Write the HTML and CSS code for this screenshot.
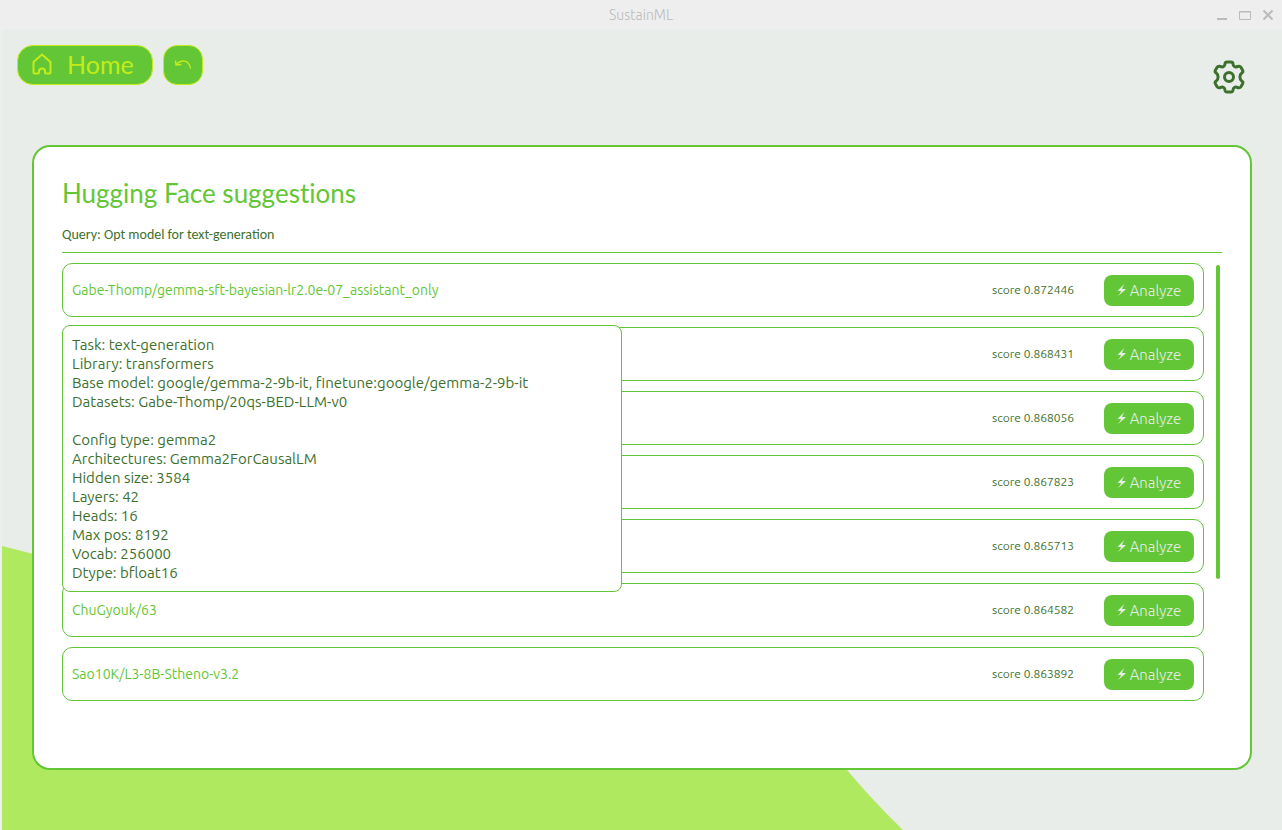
FILE: index.html
```html
<!DOCTYPE html>
<html lang="en">
<head>
  <meta charset="utf-8">
  <title>SustainML</title>
  <link rel="stylesheet" href="styles.css">
</head>
<body>
  <!-- Shared icon -->
  <svg class="icon-defs" aria-hidden="true">
    <symbol id="bolt" viewBox="0 0 9 12">
      <path d="M7.500 0 .5 6.700 4.300 7.200 1 12 9 5.200 4.800 4.700z" fill="currentColor" stroke="none"/>
    </symbol>
  </svg>

  <!-- Window title bar -->
  <header class="titlebar">
    <span class="titlebar-name">SustainML</span>
    <div class="window-controls">
      <button class="window-btn" aria-label="Minimize">
        <svg width="12" height="12" viewBox="0 0 12 12"><path d="M1 10h10" stroke-width="2"/></svg>
      </button>
      <button class="window-btn" aria-label="Maximize">
        <svg width="12" height="12" viewBox="0 0 12 12"><path d="M.5 2.500h11v8H.5zM0 3h12"/></svg>
      </button>
      <button class="window-btn" aria-label="Close">
        <svg width="12" height="12" viewBox="0 0 12 12"><path d="M1.500 1.500l9 9M10.500 1.500l-9 9" stroke-width="2"/></svg>
      </button>
    </div>
  </header>

  <main class="page">
    <svg class="hill" viewBox="0 0 1280 800" preserveAspectRatio="none" aria-hidden="true">
      <path d="M0 516C300 596 758 640 845 740Q872 772 901 800H0z" fill="#afe95f"/>
    </svg>

    <nav class="toolbar">
      <button class="btn nav-btn home-btn">
        <svg width="20" height="22" viewBox="0 0 20 22">
          <path d="M1.500 9 10 1.500 18.500 9v10.500q0 1-1 1H14q-1 0-1-1V18q0-2.500-3-2.500T7 18v1.500q0 1-1 1H2.500q-1 0-1-1z"/>
        </svg>
        Home
      </button>
      <button class="btn nav-btn undo-btn" aria-label="Back">
        <svg width="18" height="12" viewBox="0 0 18 12">
          <path d="M1.500 1.500 2 6l5.500-.5M2 6C7 0 15 .5 16.500 9.500"/>
        </svg>
      </button>
      <button class="settings-btn" aria-label="Settings">
        <svg width="34" height="34" viewBox="0 0 34 34">
          <path d="M15 2h4q1.800 0 2 1.800c.2 2.700 2 3.700 4.500 2.700q2.300-.9 3.400.8l1.700 2.900q.9 1.700-.8 2.800c-2.500 1.800-2.500 6.200 0 8q1.700 1.100.8 2.800l-1.700 2.900q-1.100 1.700-3.400.8c-2.500-1-4.300 0-4.500 2.700q-.2 1.800-2 1.800h-4q-1.800 0-2-1.800c-.2-2.700-2-3.700-4.500-2.700q-2.300.9-3.400-.8l-1.700-2.900q-.9-1.700.8-2.800c2.500-1.800 2.500-6.200 0-8q-1.700-1.100-.8-2.800l1.700-2.900q1.100-1.700 3.400-.8c2.500 1 4.300 0 4.500-2.700q.2-1.800 2-1.800z"/>
          <circle cx="17" cy="17" r="4.500"/>
        </svg>
      </button>
    </nav>

    <section class="card">
      <h1 class="card-title">Hugging Face suggestions</h1>
      <p class="query">Query: Opt model for text-generation</p>

      <div class="results">
        <ul class="result-list">
          <li class="result">
            <a class="result-name" href="#">Gabe-Thomp/gemma-sft-bayesian-lr2.0e-07_assistant_only</a>
            <span class="score">score 0.872446</span>
            <button class="btn analyze-btn"><svg width="9" height="12"><use href="#bolt"/></svg>Analyze</button>
            <!-- Model details -->
            <div class="tooltip" role="tooltip">Task: text-generation
Library: transformers
Base model: google/gemma-2-9b-it, finetune:google/gemma-2-9b-it
Datasets: Gabe-Thomp/20qs-BED-LLM-v0

Config type: gemma2
Architectures: Gemma2ForCausalLM
Hidden size: 3584
Layers: 42
Heads: 16
Max pos: 8192
Vocab: 256000
Dtype: bfloat16</div>
          </li>
          <li class="result">
            <span class="score">score 0.868431</span>
            <button class="btn analyze-btn"><svg width="9" height="12"><use href="#bolt"/></svg>Analyze</button>
          </li>
          <li class="result">
            <span class="score">score 0.868056</span>
            <button class="btn analyze-btn"><svg width="9" height="12"><use href="#bolt"/></svg>Analyze</button>
          </li>
          <li class="result">
            <span class="score">score 0.867823</span>
            <button class="btn analyze-btn"><svg width="9" height="12"><use href="#bolt"/></svg>Analyze</button>
          </li>
          <li class="result">
            <span class="score">score 0.865713</span>
            <button class="btn analyze-btn"><svg width="9" height="12"><use href="#bolt"/></svg>Analyze</button>
          </li>
          <li class="result">
            <a class="result-name" href="#">ChuGyouk/63</a>
            <span class="score">score 0.864582</span>
            <button class="btn analyze-btn"><svg width="9" height="12"><use href="#bolt"/></svg>Analyze</button>
          </li>
          <li class="result">
            <a class="result-name" href="#">Sao10K/L3-8B-Stheno-v3.2</a>
            <span class="score">score 0.863892</span>
            <button class="btn analyze-btn"><svg width="9" height="12"><use href="#bolt"/></svg>Analyze</button>
          </li>
        </ul>
        <div class="scroll-track">
          <div class="scroll-thumb"></div>
        </div>
      </div>
    </section>
  </main>
</body>
</html>
```

FILE: styles.css
```css
* {
  box-sizing: border-box;
}

body {
  margin: 0;
  min-height: 100vh;
  display: flex;
  flex-direction: column;
  font-family: Ubuntu, "Noto Sans", sans-serif;
  font-size: 14px;
  color: #3d702d;
  background: #eeeeee;
}

button {
  font-family: inherit;
  cursor: pointer;
}

svg {
  display: block;
  fill: none;
  stroke: currentColor;
}

.icon-defs {
  display: none;
}

/* Title bar */
.titlebar {
  display: grid;
  grid-template-columns: 1fr auto 1fr;
  align-items: center;
  height: 30px;
  padding: 0 8px;
  color: #bbbbbb;
}

.titlebar-name {
  grid-column: 2;
  font-weight: 300;
}

.window-controls {
  display: flex;
  justify-content: flex-end;
  gap: 11px;
}

.window-btn {
  padding: 0;
  border: none;
  background: none;
  color: inherit;
}

/* Page */
.page {
  position: relative;
  flex: 1;
  display: flex;
  flex-direction: column;
  margin-left: 2px;
  padding: 15px 30px 60px;
  background: #e8ede9;
}

.hill {
  position: absolute;
  inset: 0;
  width: 100%;
  height: 100%;
  stroke: none;
}

.toolbar {
  position: relative;
  display: flex;
  align-items: flex-start;
  gap: 10px;
  height: 100px;
  margin: 0 -15px;
}

.btn {
  border: none;
  background: #63c636;
}

.nav-btn {
  display: flex;
  align-items: center;
  height: 40px;
  border: 1px solid #c4ec19;
  color: #c4ec19;
}

.home-btn {
  gap: 15px;
  padding: 0 18px 2px 14px;
  border-radius: 16px;
  font-family: "Arima Madurai", Lato, sans-serif;
  font-size: 25px;
  line-height: 36px;
  stroke-width: 2;
}

.undo-btn {
  justify-content: center;
  width: 40px;
  padding: 0;
  border-radius: 14px;
  stroke-width: 1.5;
}

.settings-btn {
  margin: 15px 21px 0 auto;
  padding: 0;
  border: none;
  background: none;
  color: #3d702d;
  stroke-width: 3;
}

/* Suggestions card */
.card {
  position: relative;
  flex: 1;
  display: flex;
  flex-direction: column;
  padding: 28px;
  border: 2px solid #63c636;
  border-radius: 18px;
  background: white;
}

.card-title {
  margin: 0 0 15px;
  font-family: "Arima Madurai", Lato, sans-serif;
  font-size: 26px;
  font-weight: 400;
  font-variant-ligatures: none;
  line-height: 36px;
  color: #63c636;
}

.query {
  margin: 0 0 10px;
  padding-bottom: 8px;
  border-bottom: 1px solid #63c636;
  font-family: Carlito, Lato, sans-serif;
  font-size: 14px;
  font-weight: 500;
  line-height: 18px;
}

.results {
  flex: 1;
  display: flex;
  gap: 12px;
}

.result-list {
  flex: 1;
  display: flex;
  flex-direction: column;
  gap: 10px;
  margin: 0;
  padding: 0;
  list-style: none;
}

.result {
  position: relative;
  display: flex;
  align-items: center;
  height: 54px;
  padding: 0 9px;
  border: 1px solid #63c636;
  border-radius: 10px;
}

.result-name {
  color: #63c636;
  text-decoration: none;
}

.score {
  margin-left: auto;
  margin-right: 30px;
  font-size: 12px;
  line-height: 16px;
}

.analyze-btn {
  display: flex;
  align-items: center;
  justify-content: center;
  gap: 4px;
  width: 90px;
  height: 31px;
  padding: 0;
  border-radius: 8px;
  font-size: 15px;
  font-weight: 300;
  color: #e8ede9;
}

.tooltip {
  position: absolute;
  top: 61px;
  left: -1px;
  z-index: 1;
  width: 560px;
  padding: 9px;
  border: 1px solid #63c636;
  border-radius: 8px;
  background: white;
  font-size: 15px;
  line-height: 19px;
  white-space: pre-line;
}

.scroll-track {
  width: 4px;
  margin: 2px 2px 0 0;
}

.scroll-thumb {
  height: 66%;
  border-radius: 2px;
  background: #63c636;
}
```
